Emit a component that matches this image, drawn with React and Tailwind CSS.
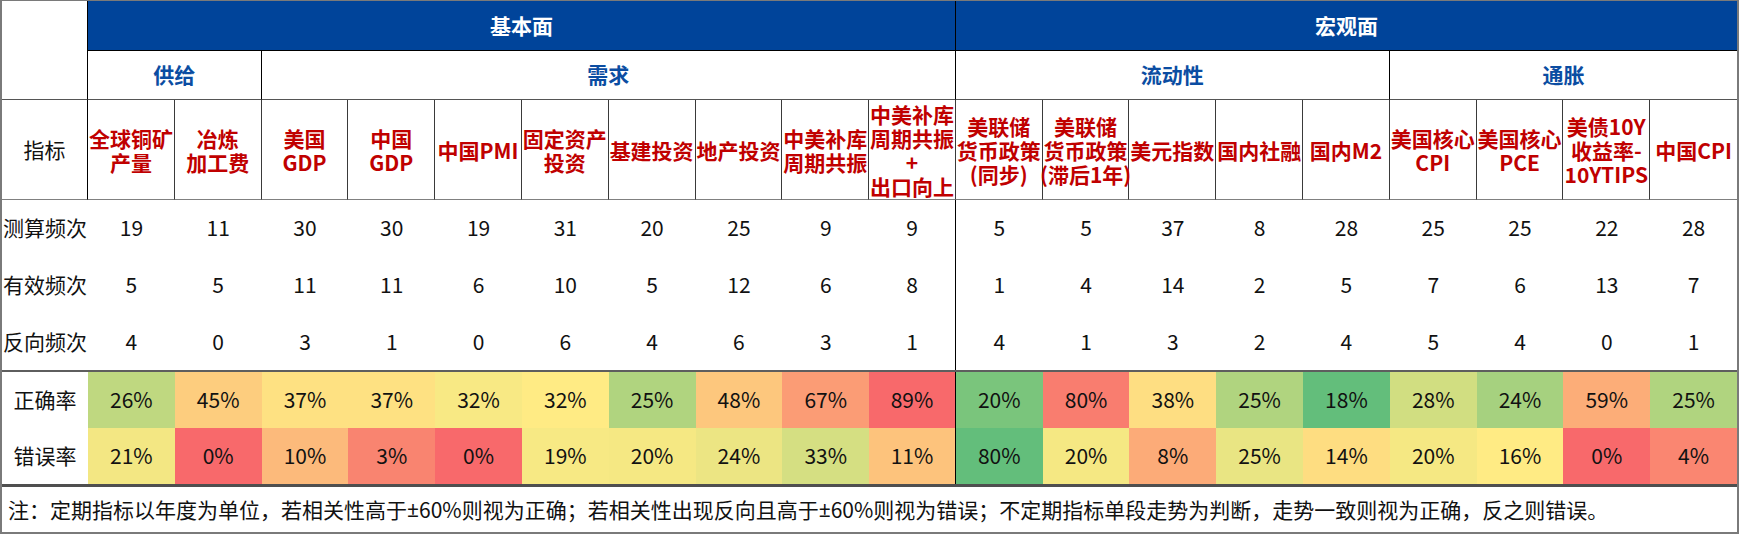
const indicators = [
  { lines: ['全球铜矿', '产量'], calc: 19, valid: 5, rev: 4, ok: 'bg-[#BFD880]', err: 'bg-[#F3E783]' },
  { lines: ['冶炼', '加工费'], calc: 11, valid: 5, rev: 0, ok: 'bg-[#FDCD7E]', err: 'bg-[#F8696B]' },
  { lines: ['美国', 'GDP'], calc: 30, valid: 11, rev: 3, ok: 'bg-[#FEE182]', err: 'bg-[#FCBA7B]' },
  { lines: ['中国', 'GDP'], calc: 30, valid: 11, rev: 1, ok: 'bg-[#FEE182]', err: 'bg-[#F98470]' },
  { lines: ['中国PMI'], calc: 19, valid: 6, rev: 0, ok: 'bg-[#F8E984]', err: 'bg-[#F8696B]' },
  { lines: ['固定资产', '投资'], calc: 31, valid: 10, rev: 6, ok: 'bg-[#FFEB84]', err: 'bg-[#F7E984]' },
  { lines: ['基建投资'], calc: 20, valid: 5, rev: 4, ok: 'bg-[#B0D47F]', err: 'bg-[#F5E883]' },
  { lines: ['地产投资'], calc: 25, valid: 12, rev: 6, ok: 'bg-[#FDC77D]', err: 'bg-[#ECE583]' },
  { lines: ['中美补库', '周期共振'], calc: 9, valid: 6, rev: 3, ok: 'bg-[#FB9C75]', err: 'bg-[#D5DF82]' },
  { lines: ['中美补库', '周期共振', '+', '出口向上'], calc: 9, valid: 8, rev: 1, ok: 'bg-[#F8696B]', err: 'bg-[#FDC37C]' },
  { lines: ['美联储', '货币政策', '(同步)'], calc: 5, valid: 1, rev: 4, ok: 'bg-[#7AC57C]', err: 'bg-[#63BE7B]' },
  { lines: ['美联储', '货币政策', '(滞后1年)'], calc: 5, valid: 4, rev: 1, ok: 'bg-[#F97D6F]', err: 'bg-[#F5E883]' },
  { lines: ['美元指数'], calc: 37, valid: 14, rev: 3, ok: 'bg-[#FEDE82]', err: 'bg-[#FCAB78]' },
  { lines: ['国内社融'], calc: 8, valid: 2, rev: 2, ok: 'bg-[#B0D47F]', err: 'bg-[#E9E583]' },
  { lines: ['国内M2'], calc: 28, valid: 5, rev: 4, ok: 'bg-[#63BE7B]', err: 'bg-[#FEDD81]' },
  { lines: ['美国核心', 'CPI'], calc: 25, valid: 7, rev: 5, ok: 'bg-[#D1DE81]', err: 'bg-[#F5E883]' },
  { lines: ['美国核心', 'PCE'], calc: 25, valid: 6, rev: 4, ok: 'bg-[#A6D17F]', err: 'bg-[#FFEB84]' },
  { lines: ['美债10Y', '收益率-', '10YTIPS'], calc: 22, valid: 13, rev: 0, ok: 'bg-[#FCAD78]', err: 'bg-[#F8696B]' },
  { lines: ['中国CPI'], calc: 28, valid: 7, rev: 1, ok: 'bg-[#B0D47F]', err: 'bg-[#FA8671]' },
];

const groups = [
  { name: '供给', span: 'col-span-2', border: 'border-r border-black' },
  { name: '需求', span: 'col-span-8', border: 'border-r border-black' },
  { name: '流动性', span: 'col-span-5', border: 'border-r border-black' },
  { name: '通胀', span: 'col-span-4', border: '' },
];

const pct = (a, b) => `${Math.round((a / b) * 100)}%`;

const cols = 'grid grid-cols-[86px_repeat(19,minmax(0,1fr))]';

// the 基本面 / 宏观面 split runs down through every row after the 10th indicator
const split = (i) => (i === 9 ? 'border-r border-black' : '');

function CountRow({ label, field }) {
  return (
    <>
      <div className="flex items-center whitespace-nowrap pl-[1px]">{label}</div>
      {indicators.map((d, i) => (
        <div key={i} className={`flex items-center justify-center ${split(i)}`}>
          {d[field]}
        </div>
      ))}
    </>
  );
}

function RateRow({ label, value, color }) {
  return (
    <>
      <div className="flex items-center justify-center bg-white">{label}</div>
      {indicators.map((d, i) => (
        <div key={i} className={`flex items-center justify-center ${d[color]} ${split(i)}`}>
          {value(d)}
        </div>
      ))}
    </>
  );
}

const PM = () => <span className="font-['Noto_Sans',sans-serif]">±</span>;

export default function App() {
  return (
    <div className="w-[1739px] h-[534px] bg-white text-[21px] text-[#111] font-['Noto_Sans_CJK_SC','Noto_Sans',sans-serif]">
      <div className="w-full h-full border-l-2 border-r-2 border-t border-b-2 border-[#7a7a7a] flex flex-col">
        {/* header rows */}
        <div className={`${cols} grid-rows-[50px_49px_100px] shrink-0`}>
          <div className="row-span-2 border-r border-b border-r-black border-b-[#555]" />
          <div className="col-span-10 flex items-center justify-center bg-[#00449A] text-white font-bold border-r border-b border-black">
            基本面
          </div>
          <div className="col-span-9 flex items-center justify-center bg-[#00449A] text-white font-bold border-b border-black">
            宏观面
          </div>
          {groups.map((g) => (
            <div
              key={g.name}
              className={`${g.span} ${g.border} flex items-center justify-center text-[#0B4DA2] font-bold border-b border-b-[#555]`}
            >
              {g.name}
            </div>
          ))}
          <div className="flex items-center justify-center border-r border-b border-r-black border-b-[#808080]">
            指标
          </div>
          {indicators.map((d, i) => (
            <div
              key={i}
              className={`flex flex-col items-center justify-center text-[#C00000] font-bold leading-[24px] whitespace-nowrap border-b border-b-[#808080] ${
                i < 18 ? 'border-r border-r-[#3a3a3a]' : ''
              }`}
            >
              {d.lines.map((l, j) => (
                <span key={j}>{l}</span>
              ))}
            </div>
          ))}
        </div>

        {/* counts */}
        <div className={`${cols} grid-rows-[56px_57px_57px] h-[172px] shrink-0 border-b-2 border-[#5e5e5e]`}>
          <CountRow label="测算频次" field="calc" />
          <CountRow label="有效频次" field="valid" />
          <CountRow label="反向频次" field="rev" />
        </div>

        {/* rates */}
        <div className={`${cols} grid-rows-[56px_56px] h-[115px] shrink-0 border-b-[3px] border-[#4f4f4f]`}>
          <RateRow label="正确率" color="ok" value={(d) => pct(d.valid, d.calc)} />
          <RateRow label="错误率" color="err" value={(d) => pct(d.rev, d.calc)} />
        </div>

        {/* note */}
        <div className="flex-1 flex items-center pl-[6px] whitespace-nowrap">
          注：定期指标以年度为单位，若相关性高于<PM />60%则视为正确；若相关性出现反向且高于<PM />60%则视为错误；不定期指标单段走势为判断，走势一致则视为正确，反之则错误。
        </div>
      </div>
    </div>
  );
}
